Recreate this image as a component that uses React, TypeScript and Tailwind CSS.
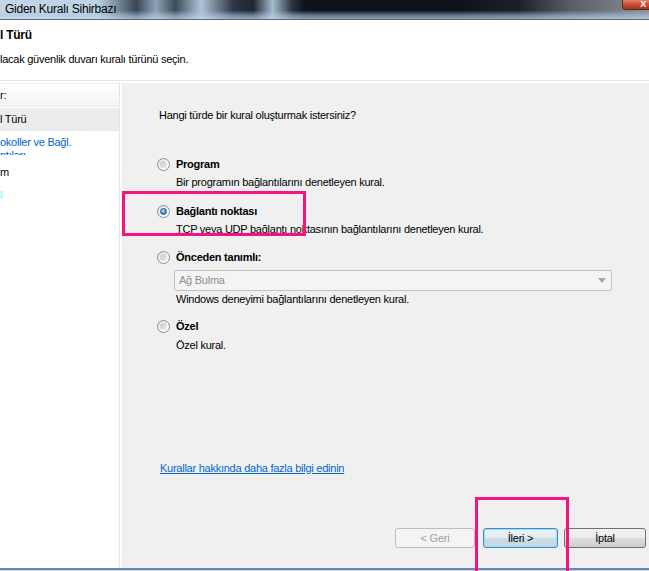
import React from 'react';

const font = { fontFamily: '"Liberation Sans", Arial, sans-serif' };

function Radio({ checked }: { checked?: boolean }) {
  return (
    <span className="flex h-[13px] w-[13px] shrink-0 items-center justify-center rounded-full border border-[#8e8f8f] bg-[linear-gradient(135deg,#dcdcdc_0%,#f8f8f8_60%,#ffffff_100%)]">
      {checked ? (
        <span className="h-[7px] w-[7px] rounded-full border border-[#1c5180] bg-[radial-gradient(circle_at_40%_35%,#b9e4fb_0%,#3e9be0_55%,#1c5a95_100%)]" />
      ) : (
        <span className="h-[7px] w-[7px] rounded-full bg-[linear-gradient(135deg,#c9c9c9_0%,#e9e9e9_100%)]" />
      )}
    </span>
  );
}

function Option({ label, desc, checked }: { label: string; desc: string; checked?: boolean }) {
  return (
    <div className="flex flex-col">
      <div className="flex h-[16px] items-center gap-[6px] pl-[35px]">
        <Radio checked={checked} />
        <span className="text-[11px] font-bold text-black">{label}</span>
      </div>
      <div className="mt-[2px] h-[16px] pl-[54px] text-[11px] leading-[16px] text-black">{desc}</div>
    </div>
  );
}

export default function App() {
  return (
    <div className="relative h-[571px] w-[649px] overflow-hidden bg-white tracking-[-0.25px]" style={font}>
      {/* window caption */}
      <div className="flex h-[19px] items-start bg-[linear-gradient(90deg,#c4d6e6_0%,#bed2e4_15%,#7b8c9c_18%,#3a4656_21%,#8ea3b6_24%,#3d4b5b_27%,#b0c4d6_31%,#2c3644_36%,#1d2631_39%,#a6bbcf_42%,#2a3440_45%,#0e131b_47%,#0d1118_70%,#1c2128_80%,#5a5f66_88%,#72777e_94%,#8a8f96_100%)]">
        <div className="flex h-full w-full items-start bg-[linear-gradient(180deg,rgba(255,255,255,0)_0%,rgba(255,255,255,0)_55%,rgba(170,200,230,0.55)_80%,rgba(200,220,240,0.7)_100%)]">
          <span className="pl-[5px] pt-[1px] text-[12px] leading-[16px] text-black">Giden Kuralı Sihirbazı</span>
          <div className="ml-auto mr-[-4px] flex h-[10px] w-[31px] items-end justify-end rounded-bl-[4px] border border-t-0 border-[#5a2a20] bg-[linear-gradient(180deg,#e0846a_0%,#c5462c_60%,#a8321c_100%)] pr-[6px]">
            <span className="text-[9px] font-bold leading-[9px] text-white">X</span>
          </div>
        </div>
      </div>
      <div className="h-[1px] bg-[#5a6672]" />

      {/* page header */}
      <div className="flex h-[60px] flex-col bg-white">
        <div className="mt-[7px] text-[12px] font-bold leading-[16px] text-black">l Türü</div>
        <div className="mt-[8px] text-[11px] leading-[16px] text-black">lacak güvenlik duvarı kuralı türünü seçin.</div>
      </div>
      <div className="h-[1px] bg-[#e4e4e4]" />
      <div className="h-[2px] bg-white" />

      {/* body */}
      <div className="flex h-[485px]">
        <div className="flex w-[120px] flex-col border-r border-[#e4e4e4] bg-white">
          <div className="flex h-[24px] items-center border-y border-[#ececec] bg-[linear-gradient(180deg,#ffffff_0%,#f4f4f4_100%)] text-[11px] text-black">r:</div>
          <div className="mt-[1px] flex h-[23px] items-center bg-[#ececec] text-[11px] text-black">l Türü</div>
          <div className="mt-[5px] h-[19px] overflow-hidden text-[11px] leading-[13px] text-[#0066cc]">
            <div>okoller ve Bağl.</div>
            <div>ntıları</div>
          </div>
          <div className="mt-[9px] text-[11px] leading-[16px] text-black">m</div>
          <div className="mt-[11px] h-[8px] w-[3px] bg-[#cdf6ff]" />
        </div>
        <div className="w-[2px] bg-white" />

        <div className="flex flex-1 flex-col bg-[#f0f0f0]">
          <div className="mt-[24px] h-[16px] pl-[37px] text-[11px] leading-[16px] text-black">Hangi türde bir kural oluşturmak istersiniz?</div>

          <div className="mt-[33px]">
            <Option label="Program" desc="Bir programın bağlantılarını denetleyen kural." />
          </div>
          <div className="mt-[13px]">
            <Option checked label="Bağlantı noktası" desc="TCP veya UDP bağlantı noktasının bağlantılarını denetleyen kural." />
          </div>
          <div className="mt-[12px]">
            <div className="flex h-[16px] items-center gap-[6px] pl-[35px]">
              <Radio />
              <span className="text-[11px] font-bold text-black">Önceden tanımlı:</span>
            </div>
            <div className="ml-[52px] mt-[5px] flex h-[21px] w-[438px] items-center justify-between rounded-[2px] border border-[#c2c2c2] bg-[#f4f4f4] pl-[4px] pr-[5px]">
              <span className="text-[11px] text-[#8d8d8d]">Ağ Bulma</span>
              <svg width="8" height="5" viewBox="0 0 8 5">
                <path d="M0 0h8L4 5z" fill="#a8a8a8" />
              </svg>
            </div>
            <div className="h-[16px] pl-[54px] text-[11px] leading-[16px] text-black">Windows deneyimi bağlantılarını denetleyen kural.</div>
          </div>
          <div className="mt-[11px]">
            <div className="flex h-[16px] items-center gap-[6px] pl-[35px]">
              <Radio />
              <span className="text-[11px] font-bold text-black">Özel</span>
            </div>
            <div className="mt-[3px] h-[16px] pl-[54px] text-[11px] leading-[16px] text-black">Özel kural.</div>
          </div>

          <div className="mt-[107px] h-[16px] pl-[38px] text-[11px] leading-[16px]">
            <a className="text-[#0066cc] underline">Kurallar hakkında daha fazla bilgi edinin</a>
          </div>

          <div className="mt-[52px] flex justify-end pr-[3px]">
            <button className="flex h-[20px] w-[80px] items-center justify-center rounded-[3px] border border-[#bdbdbd] bg-[#f4f4f4] text-[11px] text-[#a0a0a0]">&lt; Geri</button>
            <button className="ml-[8px] flex h-[20px] w-[75px] items-center justify-center rounded-[3px] border border-[#3c8ccb] bg-[linear-gradient(180deg,#eaf3f8_0%,#e0ebf2_50%,#cfdde7_51%,#c6d6e2_100%)] text-[11px] text-black shadow-[inset_0_0_0_1px_#9fdcf6]">İleri &gt;</button>
            <button className="ml-[6px] flex h-[20px] w-[82px] items-center justify-center rounded-[3px] border border-[#707070] bg-[linear-gradient(180deg,#f2f2f2_0%,#ebebeb_50%,#dddddd_51%,#cfcfcf_100%)] text-[11px] text-black">İptal</button>
          </div>
        </div>
      </div>
      <div className="h-[2px] bg-[#6b89ab]" />
      <div className="h-[1px] bg-[#c9d6e4]" />

      {/* highlight frames drawn over the dialog */}
      <div className="absolute left-[122px] top-[191px] h-[45px] w-[184px] border-[3px] border-[#f7137f]" />
      <div className="absolute left-[475px] top-[497px] h-[80px] w-[94px] border-[3px] border-[#f7137f]" />
    </div>
  );
}
